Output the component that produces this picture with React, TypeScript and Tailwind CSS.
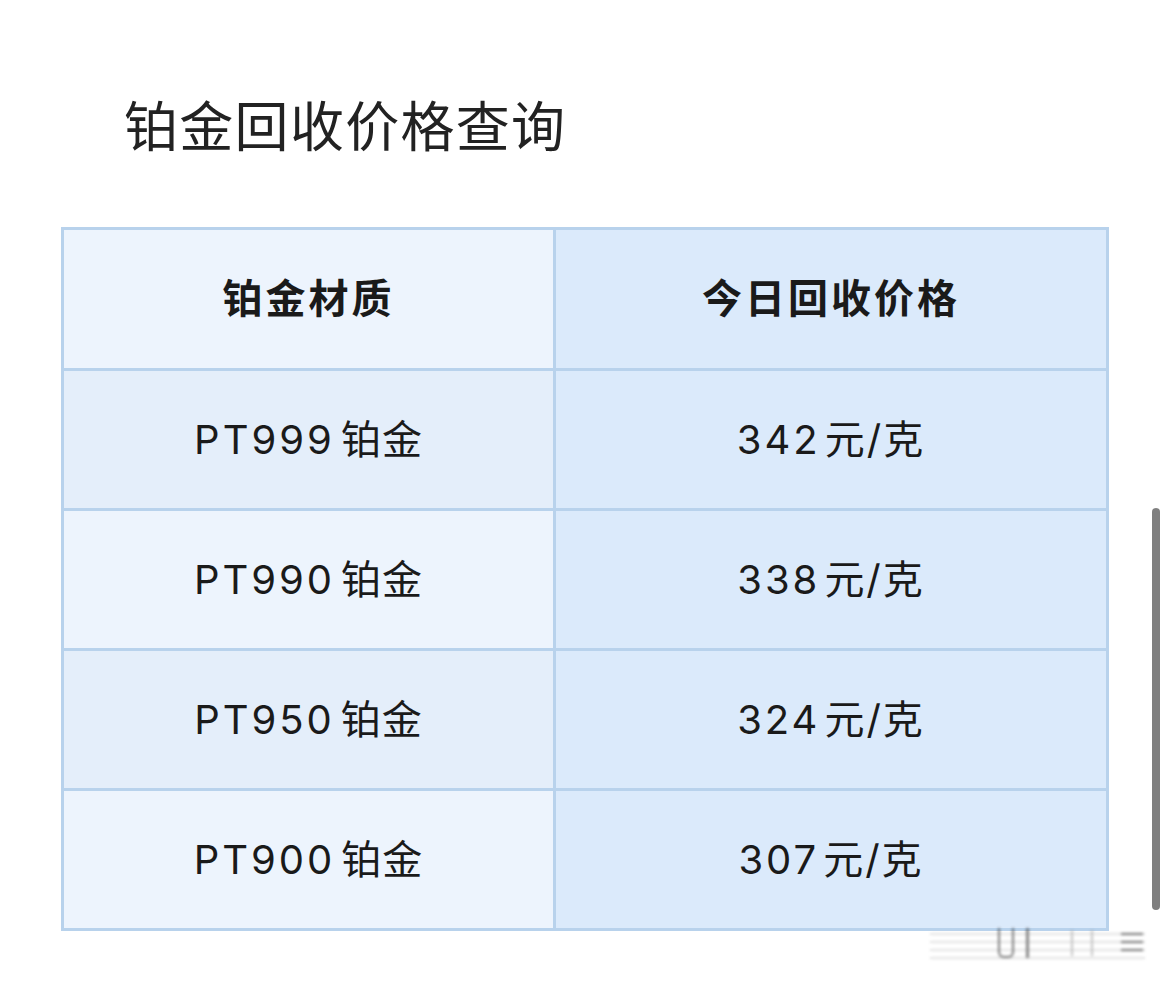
import React from "react";

const rows = [
  { name: "PT999", price: "342" },
  { name: "PT990", price: "338" },
  { name: "PT950", price: "324" },
  { name: "PT900", price: "307" },
];

const font = {
  fontFamily: '"Inter", "Noto Sans CJK SC", sans-serif',
};

export default function App() {
  return (
    <div
      className="relative w-[1170px] h-[984px] bg-white overflow-hidden text-[#1a1a1a]"
      style={font}
    >
      <h1 className="pl-[124px] pt-[95px] text-[54px] leading-[66px] font-normal tracking-[1.3px] text-[#222]">
        铂金回收价格查询
      </h1>

      <div className="pl-[61px] pt-[66px]">
        <table className="w-[1048px] border-collapse border-[3px] border-[#b8d2ec]">
          <thead>
            <tr className="h-[141px]">
              <th className="w-[492px] border-[3px] border-[#b8d2ec] bg-[#edf4fd] text-[40px] font-bold tracking-[3px]">
                铂金材质
              </th>
              <th className="border-[3px] border-[#b8d2ec] bg-[#dbeafb] text-[40px] font-bold tracking-[3px]">
                今日回收价格
              </th>
            </tr>
          </thead>
          <tbody>
            {rows.map((r, i) => (
              <tr key={r.name} className="h-[140px]">
                <td
                  className={
                    "border-[3px] border-[#b8d2ec] text-center text-[40px] " +
                    (i % 2 === 0 ? "bg-[#e4eefa]" : "bg-[#edf4fd]")
                  }
                >
                  <span className="tracking-[3px]">{r.name}</span>
                  <span className="ml-[6px] tracking-[1px]">铂金</span>
                </td>
                <td className="border-[3px] border-[#b8d2ec] bg-[#dbeafb] text-center text-[40px]">
                  <span className="tracking-[3px]">{r.price}</span>
                  <span className="ml-[4px] tracking-[2px]">元/克</span>
                </td>
              </tr>
            ))}
          </tbody>
        </table>
      </div>

      {/* scrollbar */}
      <div className="absolute left-[1152px] top-[508px] w-[8px] h-[402px] rounded-full bg-[#7f7f7f]" />

      {/* watermark */}
      <div className="absolute left-[930px] top-[928px] w-[215px] h-[32px] blur-[1.5px] opacity-70 bg-[repeating-linear-gradient(180deg,transparent_0px,transparent_5px,#d4d4d4_5px,#d4d4d4_7px,transparent_7px,transparent_8px)]">
        <div className="flex items-start h-full pl-[68px] gap-[12px]">
          <div className="w-[16px] h-[30px] border-x-[2px] border-b-[2px] border-[#444] rounded-b-[6px]" />
          <div className="w-[3px] h-[30px] bg-[#555]" />
          <div className="w-[2px] h-[26px] mt-[2px] ml-[30px] bg-[#aaa]" />
          <div className="w-[2px] h-[26px] mt-[2px] ml-[6px] bg-[#aaa]" />
          <div className="flex flex-col gap-[6px] mt-[5px] ml-[16px]">
            <div className="w-[22px] h-[2px] bg-[#333]" />
            <div className="w-[22px] h-[2px] bg-[#333]" />
            <div className="w-[22px] h-[2px] bg-[#333]" />
          </div>
        </div>
      </div>
    </div>
  );
}
